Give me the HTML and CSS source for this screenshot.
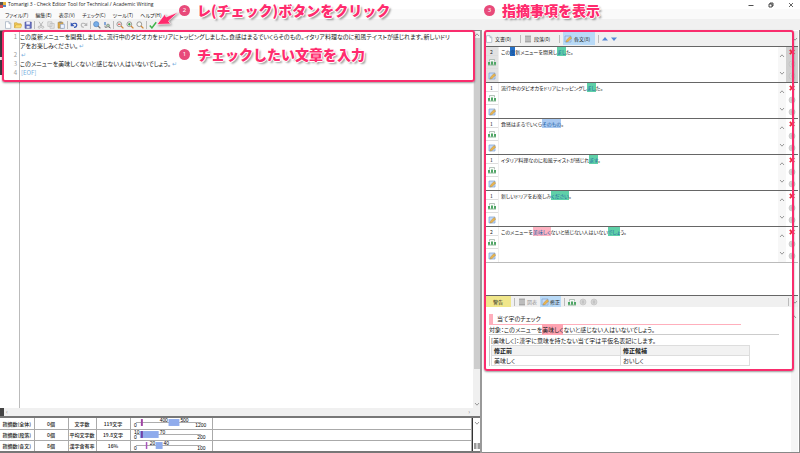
FILE: index.html
```html
<!DOCTYPE html>
<html lang="ja">
<head>
<meta charset="utf-8">
<title>Tomarigi 3 - Check Editor Tool for Technical / Academic Writing</title>
<link rel="stylesheet" href="styles.css">
</head>
<body>
<svg class="defs" aria-hidden="true">
  <symbol id="bars" viewBox="0 0 8 8"><path d="M1.500 3.500v-2h5v2" fill="#f4faf5" stroke="#9aaaa0" stroke-width=".7"/><path d="M0 4h2v3H0zM3 3.500h2V7H3zM6 4h2v3H6z" fill="#4fa665"/><path d="M0 6.500h8v1H0z" fill="#8ab896"/></symbol>
  <symbol id="note" viewBox="0 0 8 8"><path d="M1 1h6v6H1z" fill="#c3dafa" stroke="#7fa0d0" stroke-width=".7"/><path d="M2 7 2.600 5 6 1.500 7.700 3 4.200 6.500z" fill="#eab54f" stroke="#a98035" stroke-width=".4"/></symbol>
  <symbol id="cross" viewBox="0 0 6 6"><path d="m.8.8 4.400 4.400M5.200.8.8 5.200" stroke="#e8283c" stroke-width="1.700"/></symbol>
  <symbol id="dot" viewBox="0 0 8 8"><circle cx="4" cy="4" r="3" fill="#d4d4d4" stroke="#bdbdbd" stroke-width=".6"/><path d="M4 2.500v3" stroke="#aaa" stroke-width=".8"/></symbol>
  <symbol id="up" viewBox="0 0 6 6"><path d="m1 4 2-2.200L5 4" fill="none" stroke="#999"/></symbol>
  <symbol id="down" viewBox="0 0 6 6"><path d="m1 2 2 2.200L5 2" fill="none" stroke="#999"/></symbol>
  <symbol id="lens" viewBox="0 0 8 8"><circle cx="3.300" cy="3.200" r="2.400" fill="#f7f7f2" stroke="#858585" stroke-width=".8"/><path d="m5 5 2.400 2.400" stroke="#d38a38" stroke-width="1.300"/></symbol>
  <symbol id="page" viewBox="0 0 8 8"><path d="M1.500.7h3.600l1.700 1.700v5H1.500zM5 1v1.700h1.600" fill="#fff" stroke="#9eacbd" stroke-width=".7"/></symbol>
  <symbol id="lines" viewBox="0 0 8 8"><path d="M1 1.200h6M1 3h6M1 5h6M1 6.800h6" stroke="#888"/></symbol>
</svg>

<header>
  <div class="title-bar">
    <svg class="icon" viewBox="0 0 8 8"><path d="M0 1h3v3H0z" fill="#555"/><path d="M3 1h3v3H3z" fill="#e6b43c"/><path d="M0 4h3v3H0z" fill="#d4504e"/><path d="M3 4h3v2H3z" fill="#5583c5"/></svg>
    <h1>Tomarigi 3 - Check Editor Tool for Technical / Academic Writing</h1>
    <div class="window-buttons">
      <button aria-label="最小化"><svg class="icon-small" viewBox="0 0 6 6"><path d="M.5 3.500h5" stroke="#222" stroke-width=".8"/></svg></button>
      <button aria-label="元に戻す"><svg class="icon-small" viewBox="0 0 6 6"><path d="M1 2h3v3H1zM2 1.900V1h3v3H4" fill="none" stroke="#222" stroke-width=".8"/></svg></button>
      <button aria-label="閉じる"><svg class="icon-small" viewBox="0 0 6 6"><path d="m1 1 4 4m0-4L1 5" stroke="#222" stroke-width=".7"/></svg></button>
    </div>
  </div>
  <nav class="menu-bar">
    <button>ファイル(F)</button><button>編集(E)</button><button>表示(V)</button><button>チェック(C)</button><button>ツール(T)</button><button>ヘルプ(H)</button>
  </nav>
  <div class="tool-bar">
    <button aria-label="新規"><svg class="icon"><use href="#page"/></svg></button>
    <button aria-label="開く"><svg class="icon" viewBox="0 0 8 8"><path d="M.5 6.800v-5h2.600l.8 1h3v1.400" fill="#f4cb58" stroke="#c79a30" stroke-width=".6"/><path d="m.6 6.800 1.200-3h6l-1 3z" fill="#fbdc73" stroke="#c79a30" stroke-width=".5"/></svg></button>
    <button aria-label="保存"><svg class="icon" viewBox="0 0 8 8"><path d="M1 1h6.300v6.300H1z" fill="#6670c0" stroke="#4a539c" stroke-width=".6"/><path d="M2.300 1h3.600v2.500H2.300z" fill="#eef"/><path d="M2.600 5h3v2.200h-3z" fill="#dde"/></svg></button>
    <span class="rule"></span>
    <button aria-label="切り取り"><svg class="icon" viewBox="0 0 8 8"><path d="m2 .7 3 4.600M6 .7 3 5.300" stroke="#aaa" stroke-width=".8"/><circle cx="2.300" cy="6.200" r="1.100" fill="none" stroke="#aaa" stroke-width=".7"/><circle cx="5.700" cy="6.200" r="1.100" fill="none" stroke="#aaa" stroke-width=".7"/></svg></button>
    <button aria-label="コピー"><svg class="icon" viewBox="0 0 8 8"><path d="M.8.8H5v4.600H.8zM3 2.500h4.200v4.800H3z" fill="#e8e8e8" stroke="#bbb" stroke-width=".7"/></svg></button>
    <button aria-label="貼り付け"><svg class="icon" viewBox="0 0 8 8"><path d="M1 1.300h5v5.900H1z" fill="#e0ab45" stroke="#a7813a" stroke-width=".5"/><path d="M2.300.5h2.400v1.400H2.300z" fill="#888"/><path d="M3.400 3.200h4v4.200h-4z" fill="#eef4ff" stroke="#7b93bd" stroke-width=".6"/></svg></button>
    <span class="rule"></span>
    <button aria-label="元に戻す"><svg class="icon" viewBox="0 0 8 8"><path d="M2 3.500C4 1.500 7.300 2 6.700 4.500 6.400 5.800 5 6.400 4 6.300" fill="none" stroke="#3558b5" stroke-width="1.200"/><path d="M.7 1.300v4h4z" fill="#3558b5"/></svg></button>
    <button aria-label="やり直し"><svg class="icon" viewBox="0 0 8 8"><path d="M6 3.500C4 1.500.7 2 1.300 4.500 1.600 5.800 3 6.400 4 6.300" fill="none" stroke="#b5b5b5" stroke-width="1.100"/><path d="M7.300 1.500v3.600H3.800z" fill="#b5b5b5"/></svg></button>
    <span class="rule"></span>
    <button aria-label="検索"><svg class="icon" viewBox="0 0 8 8"><circle cx="3.200" cy="3.200" r="2.600" fill="#77aee8" stroke="#5585c2" stroke-width=".7"/><path d="m5 5 2.400 2.400" stroke="#777" stroke-width="1.200"/></svg></button>
    <button aria-label="置換"><svg class="icon" viewBox="0 0 8 8"><path d="M1 1h2v3H1z" fill="#84a6d8"/><path d="M2 4.500v1.800h2" fill="none" stroke="#666" stroke-width=".7"/><circle cx="5" cy="4.600" r="1.500" fill="#aaccb0" stroke="#777" stroke-width=".6"/><path d="m6 5.700 1.500 1.600" stroke="#555"/></svg></button>
    <span class="rule"></span>
    <button aria-label="縮小"><svg class="icon" viewBox="0 0 8 8"><use href="#lens"/><path d="M2 3.200h2.600" stroke="#d33"/></svg></button>
    <button aria-label="拡大"><svg class="icon" viewBox="0 0 8 8"><use href="#lens"/><path d="M2 3.200h2.600M3.300 2v2.600" stroke="#2a9a3a"/></svg></button>
    <button aria-label="標準の倍率"><svg class="icon"><use href="#lens"/></svg></button>
    <span class="rule"></span>
    <button aria-label="チェック"><svg class="icon" viewBox="0 0 8 8"><path d="m.8 4.500 2.100 2.400L7.200 1.200" fill="none" stroke="#3fb34b" stroke-width="1.500"/></svg></button>
  </div>
</header>

<main>
  <section class="left-pane">
    <div class="editor">
      <div class="side-strip"></div>
      <ol class="text-lines">
        <li><p>この度新メニューを開発しました。流行中のタピオカをドリアにトッピングしました。食感はまるでいくらそのもの。イタリア料理なのに和風テイストが感じれます。新しいドリアをお楽しみください。<i>↵</i></p></li>
        <li><p><i>↵</i></p></li>
        <li><p>このメニューを美味しくないと感じない人はいないでしょう。<i>↵</i></p></li>
        <li><p><i>[EOF]</i></p></li>
      </ol>
      <div class="scroll-track">
        <svg class="icon-small"><use href="#up"/></svg><span class="thumb"></span><svg class="icon-small"><use href="#down"/></svg>
      </div>
    </div>
    <div class="scroll-row"><span class="corner"></span><span>‹</span><span class="end">›</span></div>
    <div class="statistics">
      <table>
        <colgroup><col class="c-name"><col class="c-name"><col class="c-value"><col class="c-name"><col class="c-chart"><col></colgroup>
        <tr><th>指摘数(全体)</th><td>0個</td><th>文字数</th><td>119文字</td>
          <td><svg class="range" viewBox="0 0 82 10"><path d="M5 4.500h66" stroke="#888" stroke-width=".7"/><path d="M38 1h11v7H38z" fill="#8fabec"/><path d="M10 1h2v7h-2z" fill="#a045a5"/><text x="29" y="4">400</text><text x="50" y="4">500</text><text x="3" y="9">0</text><text x="65" y="9">1200</text></svg></td><td></td></tr>
        <tr><th>指摘数(段落)</th><td>0個</td><th>平均文字数</th><td>19.8文字</td>
          <td><svg class="range" viewBox="0 0 82 10"><path d="M5 4.500h66" stroke="#888" stroke-width=".7"/><path d="M9 1h19v7H9z" fill="#8fabec"/><path d="M10 1h2v7h-2z" fill="#7040a5"/><text x="3" y="4">10</text><text x="29" y="4">70</text><text x="3" y="9">0</text><text x="67" y="9">200</text></svg></td><td></td></tr>
        <tr><th>指摘数(各文)</th><td>8個</td><th>漢字含有率</th><td>16%</td>
          <td><svg class="range" viewBox="0 0 82 10"><path d="M5 4.500h66" stroke="#888" stroke-width=".7"/><path d="M25 1h7v7h-7z" fill="#8fabec"/><path d="M15 1h1.500v7H15z" fill="#a855bb"/><text x="19" y="4">20</text><text x="33" y="4">40</text><text x="3" y="9">0</text><text x="67" y="9">100</text></svg></td><td></td></tr>
      </table>
      <div class="statistics-side"><svg class="icon-small"><use href="#down"/></svg><svg class="icon-small" viewBox="0 0 6 6"><path d="M0 0h2.500v6H0zM3.500 0H6v6H3.500z" fill="#999"/></svg></div>
    </div>
    <div class="frame frame-editor"></div>
  </section>

  <section class="right-pane">
    <div class="tabs">
      <button class="tab"><svg class="icon"><use href="#page"/></svg>文書(0)</button>
      <span class="rule"></span>
      <button class="tab"><svg class="icon"><use href="#lines"/></svg>段落(0)</button>
      <span class="rule"></span>
      <button class="tab selected"><svg class="icon"><use href="#note"/></svg>各文(8)</button>
      <span class="rule"></span>
      <button aria-label="前へ"><svg class="icon-small" viewBox="0 0 6 6"><path d="M0 4.500 3 1l3 3.500z" fill="#5588d5"/></svg></button>
      <button aria-label="次へ"><svg class="icon-small" viewBox="0 0 6 6"><path d="M0 1.500h6L3 5z" fill="#5588d5"/></svg></button>
      <svg class="icon-small end"><use href="#down"/></svg>
    </div>
    <ul class="results">
      <li class="current"><div class="tools"><b>2</b><button aria-label="統計"><svg class="icon"><use href="#bars"/></svg></button><button aria-label="修正"><svg class="icon"><use href="#note"/></svg></button></div>
        <p>この<mark class="deep">度</mark>新メニューを開発し<mark class="green">まし</mark>た。</p>
        <div class="scroller"><svg class="icon-small"><use href="#up"/></svg><svg class="icon-small"><use href="#down"/></svg></div>
        <div class="actions"><button aria-label="削除"><svg class="icon-small"><use href="#cross"/></svg></button><svg class="icon"><use href="#dot"/></svg><svg class="icon"><use href="#dot"/></svg></div></li>
      <li><div class="tools"><b>1</b><button aria-label="統計"><svg class="icon"><use href="#bars"/></svg></button><button aria-label="修正"><svg class="icon"><use href="#note"/></svg></button></div>
        <p>流行中のタピオカをドリアにトッピングし<mark class="green">まし</mark>た。</p>
        <div class="scroller"><svg class="icon-small"><use href="#up"/></svg><svg class="icon-small"><use href="#down"/></svg></div>
        <div class="actions"><button aria-label="削除"><svg class="icon-small"><use href="#cross"/></svg></button><svg class="icon"><use href="#dot"/></svg><svg class="icon"><use href="#dot"/></svg></div></li>
      <li><div class="tools"><b>1</b><button aria-label="統計"><svg class="icon"><use href="#bars"/></svg></button><button aria-label="修正"><svg class="icon"><use href="#note"/></svg></button></div>
        <p>食感はまるでいくら<mark class="blue">そのもの</mark>。</p>
        <div class="scroller"><svg class="icon-small"><use href="#up"/></svg><svg class="icon-small"><use href="#down"/></svg></div>
        <div class="actions"><button aria-label="削除"><svg class="icon-small"><use href="#cross"/></svg></button><svg class="icon"><use href="#dot"/></svg><svg class="icon"><use href="#dot"/></svg></div></li>
      <li><div class="tools"><b>1</b><button aria-label="統計"><svg class="icon"><use href="#bars"/></svg></button><button aria-label="修正"><svg class="icon"><use href="#note"/></svg></button></div>
        <p>イタリア料理なのに和風テイストが感じれ<mark class="green">ます</mark>。</p>
        <div class="scroller"><svg class="icon-small"><use href="#up"/></svg><svg class="icon-small"><use href="#down"/></svg></div>
        <div class="actions"><button aria-label="削除"><svg class="icon-small"><use href="#cross"/></svg></button><svg class="icon"><use href="#dot"/></svg><svg class="icon"><use href="#dot"/></svg></div></li>
      <li><div class="tools"><b>1</b><button aria-label="統計"><svg class="icon"><use href="#bars"/></svg></button><button aria-label="修正"><svg class="icon"><use href="#note"/></svg></button></div>
        <p>新しいドリアをお楽しみ<mark class="green">ください</mark>。</p>
        <div class="scroller"><svg class="icon-small"><use href="#up"/></svg><svg class="icon-small"><use href="#down"/></svg></div>
        <div class="actions"><button aria-label="削除"><svg class="icon-small"><use href="#cross"/></svg></button><svg class="icon"><use href="#dot"/></svg><svg class="icon"><use href="#dot"/></svg></div></li>
      <li><div class="tools"><b>2</b><button aria-label="統計"><svg class="icon"><use href="#bars"/></svg></button><button aria-label="修正"><svg class="icon"><use href="#note"/></svg></button></div>
        <p>このメニューを<mark class="pink">美味しく</mark>ないと感じない人はいない<mark class="green">でしょ</mark>う。</p>
        <div class="scroller"><svg class="icon-small"><use href="#up"/></svg><svg class="icon-small"><use href="#down"/></svg></div>
        <div class="actions"><button aria-label="削除"><svg class="icon-small"><use href="#cross"/></svg></button><svg class="icon"><use href="#dot"/></svg><svg class="icon"><use href="#dot"/></svg></div></li>
    </ul>
    <div class="tabs detail-tabs">
      <button class="warning">警告</button>
      <span class="rule"></span>
      <button class="muted"><svg class="icon"><use href="#lines"/></svg>図表</button>
      <button class="selected"><svg class="icon"><use href="#note"/></svg>修正</button>
      <span class="rule"></span>
      <button aria-label="統計"><svg class="icon"><use href="#bars"/></svg></button>
      <button aria-label="前の指摘"><svg class="icon"><use href="#dot"/></svg></button>
      <button aria-label="次の指摘"><svg class="icon"><use href="#dot"/></svg></button>
      <span class="rule end"></span>
      <svg class="icon-small"><use href="#down"/></svg>
    </div>
    <div class="detail">
      <article>
        <h2>当て字のチェック</h2>
        <p class="subject">対象：このメニューを<mark class="rose">美味しく</mark>ないと感じない人はいないでしょう。</p>
        <div class="fix">
          <p>[美味しく]：漢字に意味を持たない当て字は平仮名表記にします。</p>
          <table>
            <tr><th>修正前</th><th>修正候補</th></tr>
            <tr><td>美味しく</td><td>おいしく</td></tr>
          </table>
        </div>
      </article>
      <div class="detail-scroll"><svg class="icon-small"><use href="#up"/></svg></div>
    </div>
    <div class="frame frame-results"></div>
  </section>
</main>

<svg class="arrow" viewBox="0 0 24 16"><path d="M22.500 1 10 6 9 3 1 13.500 14.500 13 12.500 10z" fill="#ff2b6d" stroke="#fff" stroke-width=".6"/></svg>
<div class="callout callout-input"><span>1</span><strong>チェックしたい文章を入力</strong></div>
<div class="callout callout-button"><span>2</span><strong>レ(チェック)ボタンをクリック</strong></div>
<div class="callout callout-results"><span>3</span><strong>指摘事項を表示</strong></div>
</body>
</html>
```
FILE: styles.css
```css
* { box-sizing: border-box; }
body {
  margin: 0;
  min-height: 100vh;
  display: flex;
  flex-direction: column;
  position: relative;
  background: #f0f0f0;
  color: #222;
  font: 6px/9px "Noto Sans CJK JP", sans-serif;
  font-feature-settings: "palt";
}
h1, h2, p, ul, ol { margin: 0; padding: 0; font: inherit; font-feature-settings: inherit; list-style: none; }
button { border: 0; padding: 0; background: none; color: inherit; font: 5px/9px "Noto Sans CJK JP", sans-serif; display: flex; align-items: center; white-space: nowrap; }
table { border-collapse: collapse; }
.defs { position: absolute; width: 0; height: 0; }
.icon { width: 8px; height: 8px; flex: none; }
.icon-small { width: 6px; height: 6px; flex: none; }
.end { margin-left: auto; }
.rule { width: 1px; height: 8px; background: #bbb; flex: none; }

.title-bar { display: flex; align-items: center; height: 9px; background: #fff; }
.title-bar h1 { font: 5px/9px "Open Sans", sans-serif; }
.window-buttons { display: flex; gap: 14px; margin-left: auto; padding-right: 6px; }
.menu-bar { display: flex; gap: 7px; height: 10px; padding-left: 5px; background: #fafafa; font-feature-settings: "palt"; }
.menu-bar button { font-feature-settings: inherit; }
.tool-bar { display: flex; align-items: center; gap: 2px; height: 11px; padding-left: 4px; }

main { flex: 1; display: grid; grid-template-columns: 482fr 318fr; }
.left-pane, .right-pane { position: relative; display: flex; flex-direction: column; min-width: 0; }
.left-pane { border-right: 2px solid #999; }
.editor { flex: 1; display: flex; background: #fff; border-top: 1px solid #888; }
.side-strip { width: 3px; height: 44px; background: linear-gradient(#403b42 26px, #eee 26px 29px, #403b42 29px); }
.text-lines { flex: 1; display: grid; grid-template-columns: 1fr; align-content: start; padding: 1px 21px 0 0; counter-reset: line; background: linear-gradient(#bbb, #bbb) 16px 0 / 1px 100% no-repeat; }
.text-lines li { display: grid; grid-template-columns: 14px 1fr; column-gap: 3px; counter-increment: line; }
.text-lines li::before { content: counter(line); text-align: right; color: #999; }
.text-lines i { color: #78aede; font-style: normal; margin-left: 1px; }
.scroll-track { width: 7px; display: flex; flex-direction: column; align-items: center; background: #f0f0f0; padding: 1px 0; }
.thumb { flex: 1; width: 6px; margin-bottom: 32px; background: #cdcdcd; }
.scroll-row { display: flex; height: 8px; line-height: 7px; color: #888; background: #f0f0f0; padding-right: 10px; gap: 2px; }
.corner { width: 4px; background: #444; }
.statistics { display: flex; border: solid #777; border-width: 2px 0; background: #fff; }
.statistics table { flex: 1; table-layout: fixed; width: 0; font: 500 5px/9px "Noto Sans CJK JP", sans-serif; }
.c-name { width: 34px; }
.c-value { width: 28px; }
.c-chart { width: 82px; }
.statistics th, .statistics td { height: 11px; padding: 0; border: 1px solid #aaa; border-width: 0 1px 1px 0; text-align: center; font-weight: 500; white-space: nowrap; }
.statistics tr:last-child > * { border-bottom: 0; }
.range { display: block; width: 100%; height: 10px; overflow: visible; font: 5px "Liberation Sans", sans-serif; }
.statistics-side { width: 8px; display: flex; flex-direction: column; align-items: center; justify-content: space-between; padding: 2px 0; border-left: 1px solid #333; }

.right-pane { padding: 0 1px 0 3px; background: #fff; border: solid #888; border-width: 0 1px 1px 0; }
.tabs { display: flex; align-items: center; gap: 3px; height: 15px; margin-top: 1px; background: #f0f0f0; }
.tab { width: 32px; }
.tabs button { gap: 2px; }
.tabs .selected { align-self: stretch; background: #b9daf7; margin: 1px 0; padding-left: 1px; }
.results { flex: none; min-height: 249px; }
.results li { display: grid; grid-template-columns: 13px 1fr 8px 12px; height: 36px; border-top: 1px solid #666; }
.results li:last-child { height: 37px; border-bottom: 1px solid #bbb; }
.results p { font-size: 5px; padding-left: 2px; border-left: 1px solid #eee; }
.tools { display: grid; grid-template-rows: 9px 13px 13px; font-size: 5px; }
.tools > * { display: grid; place-items: center; border-bottom: 1px solid #ddd; font-weight: 400; }
.tools > :last-child { border-bottom: 0; }
.scroller { display: flex; flex-direction: column; align-items: center; justify-content: space-between; padding: 6px 0; background: #f7f7f7; }
.actions { display: flex; flex-direction: column; align-items: center; justify-content: space-between; padding: 2px 0; }
.current .tools { background: #e2e2e2; }
.current .actions { background: #d0d0d0; }
mark { color: #2463a5; padding: 1px 0; }
.deep { background: #2471c9; color: #123f80; }
.green { background: #5fd0a8; }
.blue { background: #a8c8f0; }
.pink { background: #ffb3c2; }
.rose { background: #ffa4b2; color: inherit; }

.detail-tabs { gap: 3px; height: 12px; margin: 0; border-top: 1px solid #666; }
.detail-tabs button { gap: 1px; }
.detail-tabs .warning { align-self: stretch; justify-content: center; width: 26px; background: #f0e68a; }
.detail-tabs .selected { margin: 0; padding-right: 1px; }
.muted { color: #999; }
.detail { flex: 1; display: flex; }
article { flex: 1; padding: 7px 12px 0 4px; }
.detail h2 { width: 87%; height: 11px; padding-left: 4px; border-left: 4px solid #ffafbc; border-bottom: 1px solid #ffafbc; }
.subject { height: 10px; border-bottom: 1px solid #ccc; }
.fix { border-left: 1px solid #ccc; padding-left: 1px; margin-top: 1px; }
.fix table { width: 90%; }
.fix th, .fix td { width: 50%; height: 10px; padding: 0 2px; border: 1px solid #ddd; text-align: left; }
.fix th { background: #f2f2f2; font-weight: 700; }
.detail-scroll { width: 7px; padding-top: 6px; background: #f5f5f5; }

.frame { position: absolute; border: 2px solid #f92d6d; border-radius: 3px; box-shadow: 0 1px 2px #0006; pointer-events: none; }
.frame-editor { inset: 0 5px auto 2px; height: 52px; }
.frame-results { inset: 0 5px auto 2px; height: 341px; }
.arrow { position: absolute; left: 156px; top: 11px; width: 24px; height: 16px; filter: drop-shadow(1px 1px 1px #0006); }
.callout { position: absolute; display: flex; align-items: center; gap: 7px; font-feature-settings: normal; }
.callout span { width: 11px; height: 11px; border-radius: 50%; background: #e84a7a; color: #fff; text-align: center; font: 6px/11px "Noto Sans", sans-serif; }
.callout strong { font-size: 14px; line-height: 20px; font-weight: 900; color: #ff2b6d; white-space: nowrap; text-shadow: 1px 0 #fff, -1px 0 #fff, 0 1px #fff, 0 -1px #fff, 2px 2px 2px #0006; }
.callout-input { left: 179px; top: 44px; }
.callout-button { left: 179px; top: 0; }
.callout-results { left: 484px; top: 0; }
```
